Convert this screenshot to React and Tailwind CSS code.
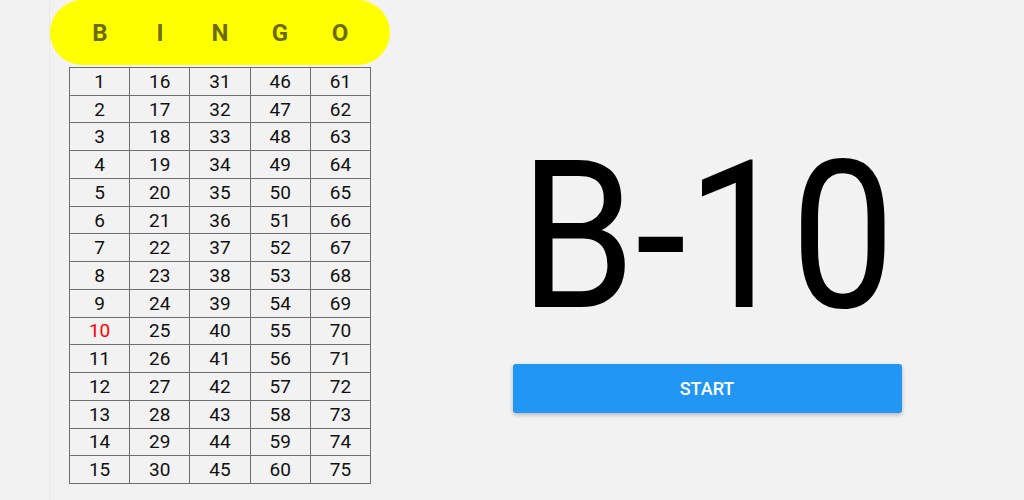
import React from 'react';

const letters = ['B', 'I', 'N', 'G', 'O'];
const rows = Array.from({ length: 15 }, (_, i) => i + 1);
const called = [10];

const App = () => {
  return (
    <div className="w-[1024px] h-[500px] bg-[#f2f2f2] flex overflow-hidden font-['Roboto',sans-serif]">
      <div className="ml-[49px] w-[341px] h-full border-l border-[#e9e9e9] flex flex-col">
        <div className="h-[65px] bg-[#ffff00] rounded-full px-[20px] flex items-center">
          <div className="w-[301px] grid grid-cols-5">
            {letters.map((l) => (
              <div key={l} className="text-center text-[24px] font-bold text-[#6b6b00] leading-none">
                {l}
              </div>
            ))}
          </div>
        </div>
        <div className="mt-[2px] ml-[19px] w-[302px] h-[417px] bg-[#6f6f6f] p-px grid grid-cols-5 grid-rows-[repeat(15,1fr)] gap-px">
          {rows.map((r) =>
            letters.map((_, c) => {
              const n = r + c * 15;
              return (
                <div
                  key={n}
                  className={`bg-[#f2f2f2] flex items-center justify-center text-[19px] leading-none ${
                    called.includes(n) ? 'text-[#ff0000]' : 'text-[#111]'
                  }`}
                >
                  {n}
                </div>
              );
            })
          )}
        </div>
      </div>

      <div className="flex-1 flex flex-col items-center pt-[134px]">
        <div className="text-[206px] leading-none text-black scale-x-[0.9]">B-10</div>
        <button className="mt-[24px] w-[389px] h-[49px] bg-[#2196f3] rounded-[3px] shadow-[0_2px_4px_rgba(0,0,0,0.25)] text-white text-[18px] font-medium uppercase">
          Start
        </button>
      </div>
    </div>
  );
};

export default App;
